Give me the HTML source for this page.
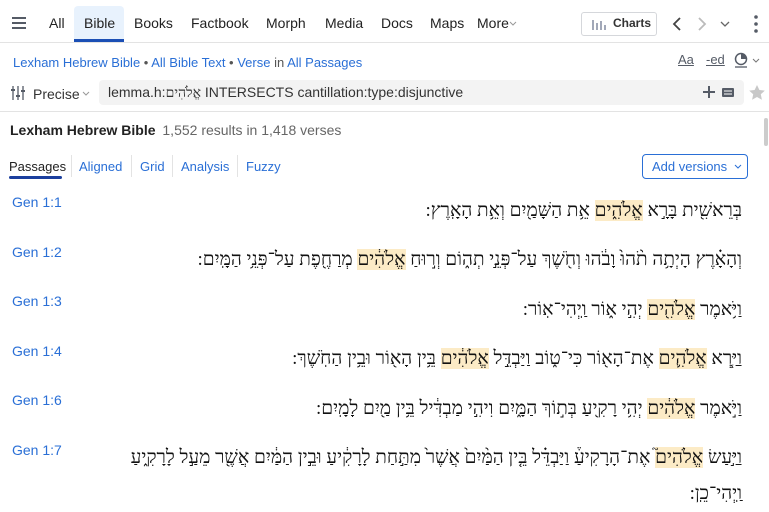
<!DOCTYPE html>
<html><head><meta charset="utf-8"><style>
*{box-sizing:border-box;margin:0;padding:0}
body{width:769px;height:512px;overflow:hidden;background:#fff;font-family:"Liberation Sans",sans-serif;position:relative;color:#222}
.a{position:absolute;white-space:nowrap}
.nav{font-size:14px;color:#222}
.link{color:#2a6fd6}
.heb{position:absolute;right:27px;direction:rtl;text-align:right;font-family:"Liberation Serif","DejaVu Serif",serif;font-size:19px;color:#111;white-space:nowrap;line-height:36px}
.hl{background:#fcebc6}
.ref{position:absolute;left:12px;font-size:14px;color:#2a6fd6}
</style></head><body>
<svg class="a" style="left:11px;top:16px" width="16" height="14"><path d="M1 2h14M1 7h14M1 12h14" stroke="#555b66" stroke-width="2"/></svg>
<div class="a" style="left:74px;top:6px;width:50px;height:36px;background:#e8f2fd;border-radius:4px 4px 0 0"></div>
<div class="a" style="left:74px;top:39px;width:50px;height:3px;background:#1b4fb5"></div>
<div class="a nav" style="left:49px;top:15px">All</div>
<div class="a nav" style="left:84px;top:15px">Bible</div>
<div class="a nav" style="left:134px;top:15px">Books</div>
<div class="a nav" style="left:191px;top:15px">Factbook</div>
<div class="a nav" style="left:266px;top:15px">Morph</div>
<div class="a nav" style="left:325px;top:15px">Media</div>
<div class="a nav" style="left:381px;top:15px">Docs</div>
<div class="a nav" style="left:430px;top:15px">Maps</div>
<div class="a nav" style="left:477px;top:15px">More</div>
<svg class="a" style="left:509px;top:21px" width="8" height="5"><path d="M1 1l3 3 3-3" stroke="#999" fill="none"/></svg>
<div class="a" style="left:581px;top:12px;width:76px;height:24px;border:1px solid #d5d7db;border-radius:3px"></div>
<svg class="a" style="left:592px;top:18px" width="14" height="12"><path d="M1 2v10M5 5v7M9 3v9M13 7v5" stroke="#8a93a6" stroke-width="1.6"/></svg>
<div class="a" style="left:613px;top:16px;font-size:12px;font-weight:bold;color:#333">Charts</div>
<svg class="a" style="left:672px;top:17px" width="10" height="14"><path d="M8 1L2 7l6 6" stroke="#444" stroke-width="1.8" fill="none"/></svg>
<svg class="a" style="left:697px;top:17px" width="10" height="14"><path d="M2 1l6 6-6 6" stroke="#bbb" stroke-width="1.8" fill="none"/></svg>
<svg class="a" style="left:720px;top:21px" width="10" height="6"><path d="M1 1l4 4 4-4" stroke="#666" stroke-width="1.3" fill="none"/></svg>
<svg class="a" style="left:753px;top:14px" width="6" height="20"><circle cx="3" cy="3" r="1.8" fill="#555b66"/><circle cx="3" cy="10" r="1.8" fill="#555b66"/><circle cx="3" cy="17" r="1.8" fill="#555b66"/></svg>
<div class="a" style="left:0;top:42px;width:769px;height:1px;background:#e3e3e3"></div>
<div class="a" style="left:13px;top:55px;font-size:13px;color:#555"><span class="link">Lexham Hebrew Bible</span> • <span class="link">All Bible Text</span> • <span class="link">Verse</span> in <span class="link">All Passages</span></div>
<div class="a" style="left:678px;top:52px;font-size:13px;color:#555b66;text-decoration:underline">Aa</div>
<div class="a" style="left:706px;top:52px;font-size:13px;color:#555b66;text-decoration:underline">-ed</div>
<svg class="a" style="left:734px;top:52px" width="14" height="16"><circle cx="7" cy="7" r="5.5" stroke="#555b66" stroke-width="1.5" fill="none"/><path d="M7 7V1.5A5.5 5.5 0 0 1 12.5 7z" fill="#555b66"/><path d="M1 15h12" stroke="#555b66" stroke-width="1.3"/></svg>
<svg class="a" style="left:752px;top:58px" width="8" height="5"><path d="M1 1l3 3 3-3" stroke="#777" fill="none"/></svg>
<svg class="a" style="left:11px;top:86px" width="14" height="14"><path d="M2 0v14M7 0v14M12 0v14" stroke="#555b66" stroke-width="1.3"/><path d="M0 4h4M5 10h4M10 5h4" stroke="#555b66" stroke-width="2"/></svg>
<div class="a" style="left:33px;top:86px;font-size:14px;color:#333">Precise</div>
<svg class="a" style="left:82px;top:91px" width="8" height="5"><path d="M1 1l3 3 3-3" stroke="#999" fill="none"/></svg>
<div class="a" style="left:99px;top:80px;width:645px;height:25px;background:#f3f3f3;border-radius:4px"></div>
<div class="a" style="left:108px;top:84px;font-size:14px;color:#333">lemma.h:<span style="font-family:'Liberation Serif',serif">אֱלֹהִים</span> INTERSECTS cantillation:type:disjunctive</div>
<svg class="a" style="left:703px;top:86px" width="12" height="12"><path d="M6 0v12M0 6h12" stroke="#555b66" stroke-width="2"/></svg>
<svg class="a" style="left:722px;top:88px" width="12" height="9"><rect x="0" y="0" width="12" height="9" rx="1" fill="#555b66"/><path d="M2 3h8M2 6h8" stroke="#fff" stroke-width="1"/></svg>
<svg class="a" style="left:749px;top:85px" width="16" height="15"><path d="M8 0l2.4 5 5.4.6-4 3.7 1.1 5.4L8 12l-4.9 2.7 1.1-5.4-4-3.7L5.6 5z" fill="#c8c8c8"/></svg>
<div class="a" style="left:0;top:111px;width:769px;height:1px;background:#e3e3e3"></div>
<div class="a" style="left:764px;top:118px;width:4px;height:28px;background:#ccc;border-radius:2px"></div>
<div class="a" style="left:10px;top:122px;font-size:14px"><b style="color:#222">Lexham Hebrew Bible</b> <span style="color:#666;margin-left:3px">1,552 results in 1,418 verses</span></div>
<div class="a" style="left:9px;top:159px;font-size:13px;color:#222">Passages</div>
<div class="a" style="left:9px;top:176px;width:53px;height:3px;background:#1b3f9e;border-radius:2px"></div>
<div class="a" style="left:71px;top:155px;width:1px;height:22px;background:#e3e3e3"></div>
<div class="a link" style="left:79px;top:159px;font-size:13px">Aligned</div>
<div class="a" style="left:131px;top:155px;width:1px;height:22px;background:#e3e3e3"></div>
<div class="a link" style="left:140px;top:159px;font-size:13px">Grid</div>
<div class="a" style="left:172px;top:155px;width:1px;height:22px;background:#e3e3e3"></div>
<div class="a link" style="left:181px;top:159px;font-size:13px">Analysis</div>
<div class="a" style="left:237px;top:155px;width:1px;height:22px;background:#e3e3e3"></div>
<div class="a link" style="left:246px;top:159px;font-size:13px">Fuzzy</div>
<div class="a" style="left:642px;top:154px;width:106px;height:25px;border:1px solid #2a6fd6;border-radius:4px"></div>
<div class="a link" style="left:652px;top:159px;font-size:13px">Add versions</div>
<svg class="a" style="left:734px;top:164px" width="8" height="5"><path d="M1 1l3 3 3-3" stroke="#2a6fd6" fill="none"/></svg>
<div class="ref" style="top:194px">Gen 1:1</div>
<div class="heb" style="top:193px">בְּרֵאשִׁ֖ית בָּרָ֣א <span class="hl">אֱלֹהִ֑ים</span> אֵ֥ת הַשָּׁמַ֖יִם וְאֵ֥ת הָאָֽרֶץ:</div>
<div class="ref" style="top:244px">Gen 1:2</div>
<div class="heb" style="top:242px">וְהָאָ֗רֶץ הָיְתָ֥ה תֹ֨הוּ֙ וָבֹ֔הוּ וְחֹ֖שֶׁךְ עַל־פְּנֵ֣י תְה֑וֹם וְר֣וּחַ <span class="hl">אֱלֹהִ֔ים</span> מְרַחֶ֖פֶת עַל־פְּנֵ֥י הַמָּֽיִם:</div>
<div class="ref" style="top:293px">Gen 1:3</div>
<div class="heb" style="top:292px">וַיֹּ֥אמֶר <span class="hl">אֱלֹהִ֖ים</span> יְהִ֣י א֑וֹר וַֽיְהִי־אֽוֹר:</div>
<div class="ref" style="top:343px">Gen 1:4</div>
<div class="heb" style="top:341px">וַיַּ֧רְא <span class="hl">אֱלֹהִ֛ים</span> אֶת־הָא֖וֹר כִּי־ט֑וֹב וַיַּבְדֵּ֣ל <span class="hl">אֱלֹהִ֔ים</span> בֵּ֥ין הָא֖וֹר וּבֵ֥ין הַחֹֽשֶׁךְ:</div>
<div class="ref" style="top:392px">Gen 1:6</div>
<div class="heb" style="top:391px">וַיֹּ֣אמֶר <span class="hl">אֱלֹהִ֔ים</span> יְהִ֥י רָקִ֖יעַ בְּת֣וֹךְ הַמָּ֑יִם וִיהִ֣י מַבְדִּ֔יל בֵּ֥ין מַ֖יִם לָמָֽיִם:</div>
<div class="ref" style="top:442px">Gen 1:7</div>
<div class="heb" style="top:440px;line-height:36px">וַיַּ֣עַשׂ <span class="hl">אֱלֹהִים֮</span> אֶת־הָרָקִיעַ֒ וַיַּבְדֵּ֗ל בֵּ֤ין הַמַּ֨יִם֙ אֲשֶׁר֙ מִתַּ֣חַת לָרָקִ֔יעַ וּבֵ֣ין הַמַּ֔יִם אֲשֶׁ֖ר מֵעַ֣ל לָרָקִ֑יעַ<br>וַֽיְהִי־כֵֽן:</div>
</body></html>
